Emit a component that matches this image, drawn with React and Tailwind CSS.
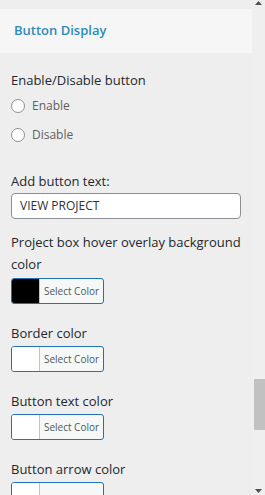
import React from "react";

function ColorPicker({ swatch, label = "Select Color" }) {
  return (
    <div className="flex h-[26px] w-[93px] overflow-hidden rounded-[3px] border border-[#2271b1] bg-[#f6f7f7]">
      <div className={`w-[28px] border-r border-[#c3c4c7] ${swatch}`} />
      <div className="flex flex-1 items-center justify-center text-[10px] text-[#50575e]">{label}</div>
    </div>
  );
}

function Radio({ label }) {
  return (
    <label className="flex h-[29px] items-center gap-[7px]">
      <span className="h-[14px] w-[14px] rounded-full border border-[#8c8f94] bg-white" />
      <span className="text-[12px] text-[#5f5f5f]">{label}</span>
    </label>
  );
}

export default function App() {
  const colors = [
    { label: "Border color", swatch: "bg-white" },
    { label: "Button text color", swatch: "bg-white" },
    { label: "Button arrow color", swatch: "bg-white", empty: true },
  ];

  return (
    <div
      className="flex h-[495px] w-[265px] overflow-hidden bg-[#eeeeee] text-[#23282d]"
      style={{ fontFamily: '"Open Sans", "Noto Sans", sans-serif' }}
    >
      <div className="w-[252px] pt-[9px]">
        <div className="flex h-[44px] items-center bg-[#f6f6f6] pl-[14px] text-[13px] font-semibold text-[#2d8ab9]">
          Button Display
        </div>

        <div className="px-[11px]">
          <p className="mt-[16px] text-[13px] leading-[22px]">Enable/Disable button</p>
          <div>
            <Radio label="Enable" />
            <Radio label="Disable" />
          </div>

          <p className="mt-[21px] text-[13px] leading-[22px]">Add button text:</p>
          <div className="mt-[1px] flex h-[26px] w-[230px] items-center rounded-[4px] border border-[#8c8f94] bg-white px-[8px] text-[12px] text-[#2c3338]">
            VIEW PROJECT
          </div>

          <p className="mt-[12px] text-[13px] leading-[22px]">
            Project box hover overlay background color
          </p>
          <div className="mt-[3px]">
            <ColorPicker swatch="bg-black" />
          </div>

          {colors.map((c) => (
            <div key={c.label}>
              <p className="mt-[18px] text-[13px] leading-[22px]">{c.label}</p>
              <div className="mt-[2px]">
                <ColorPicker swatch={c.swatch} label={c.empty ? "" : "Select Color"} />
              </div>
            </div>
          ))}
        </div>
      </div>

      <div className="flex w-[13px] flex-col bg-[#efefef]">
        <div className="flex h-[10px] items-start justify-center pt-[1px]">
          <svg width="7" height="4" viewBox="0 0 7 4"><path d="M0 4 L3.5 0 L7 4 Z" fill="#505050" /></svg>
        </div>
        <div className="mt-[369px] ml-[2px] h-[51px] w-[11px] bg-[#c1c1c1]" />
        <div className="mt-auto flex h-[10px] items-end justify-center pb-[2px]">
          <svg width="7" height="4" viewBox="0 0 7 4"><path d="M0 0 L7 0 L3.5 4 Z" fill="#505050" /></svg>
        </div>
      </div>
    </div>
  );
}
